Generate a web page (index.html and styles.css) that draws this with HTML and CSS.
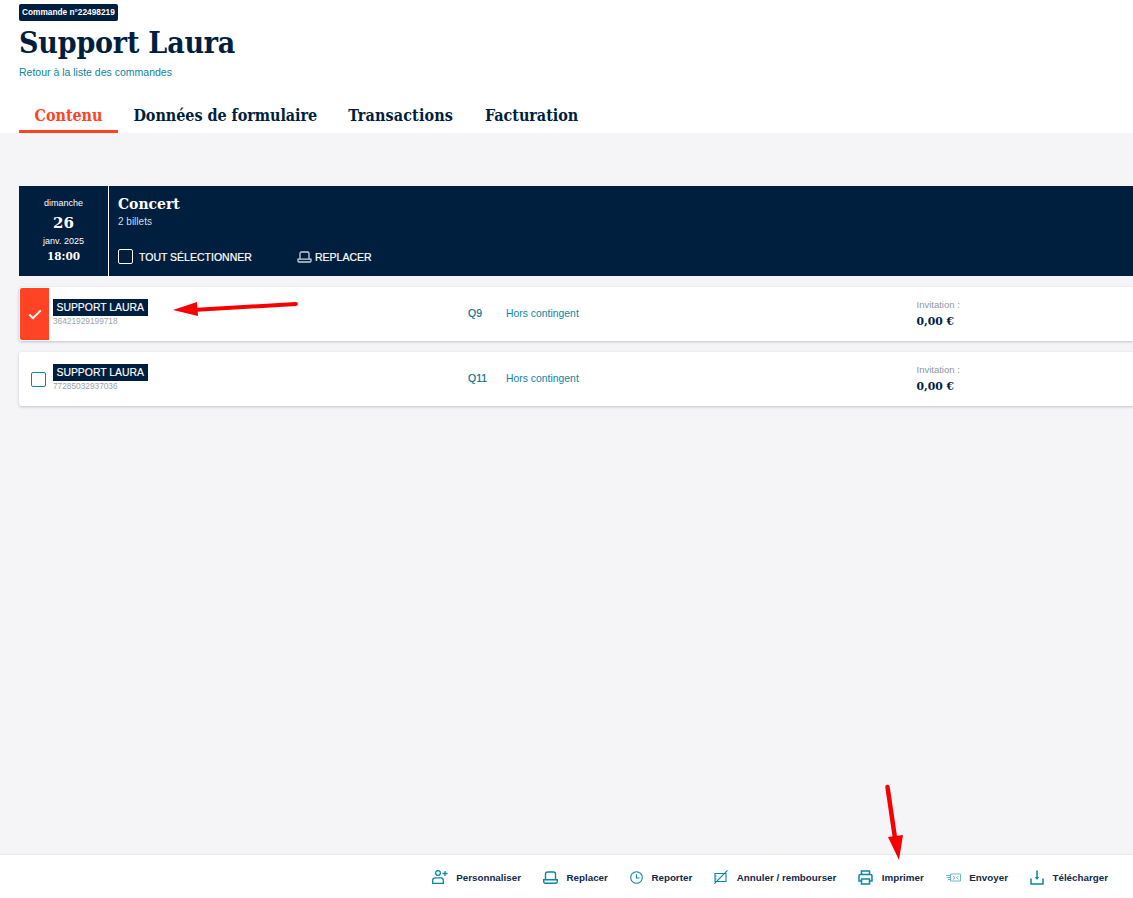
FILE: index.html
```html
<!DOCTYPE html>
<html lang="fr">
<head>
<meta charset="utf-8">
<title>Support Laura</title>
<link rel="stylesheet" href="styles.css">
</head>
<body>
<div class="page">
  <header class="head">
    <span class="badge">Commande n°22498219</span>
    <h1 class="title">Support Laura</h1>
    <a class="back">Retour à la liste des commandes</a>
    <nav class="tabs">
      <a class="tab active">Contenu</a>
      <a class="tab">Données de formulaire</a>
      <a class="tab">Transactions</a>
      <a class="tab">Facturation</a>
    </nav>
  </header>
  <main class="content">
    <section class="event">
      <div class="date">
        <span class="day">dimanche</span>
        <strong class="num">26</strong>
        <span class="month">janv. 2025</span>
        <strong class="time">18:00</strong>
      </div>
      <div class="info">
        <h2 class="name">Concert</h2>
        <p class="count">2 billets</p>
        <div class="actions">
          <label class="select"><span class="box"></span>TOUT SÉLECTIONNER</label>
          <span class="move">
            <svg width="15" height="12" viewBox="0 0 15 12" fill="none" stroke="#c9d3de" stroke-width="1.3"><path d="M3 8V2.500C3 1.600 3.600 1 4.500 1h6c.9 0 1.500.6 1.500 1.500V8"/><path d="M1 8.200h13V10c0 .6-.4 1-1 1H2c-.6 0-1-.4-1-1z"/></svg>
            REPLACER
          </span>
        </div>
      </div>
    </section>
    <article class="ticket checked">
      <div class="check">
        <svg width="14" height="11" viewBox="0 0 14 11" fill="none" stroke="#fff" stroke-width="2"><path d="M1.200 5.600 5 9.200 12.800 1.400"/></svg>
      </div>
      <div class="holder"><span class="person">SUPPORT LAURA</span><span class="code">36421929199718</span></div>
      <span class="seat">Q9</span>
      <span class="quota">Hors contingent</span>
      <div class="price"><span class="kind">Invitation :</span><strong class="amount">0,00 €</strong></div>
    </article>
    <article class="ticket">
      <div class="check"><span class="tick-box"></span></div>
      <div class="holder"><span class="person">SUPPORT LAURA</span><span class="code">77285032937036</span></div>
      <span class="seat">Q11</span>
      <span class="quota">Hors contingent</span>
      <div class="price"><span class="kind">Invitation :</span><strong class="amount">0,00 €</strong></div>
    </article>
  </main>
  <footer class="bar">
    <a class="tool">
      <svg width="16" height="14" viewBox="0 0 16 14" fill="none" stroke="#0b86a3" stroke-width="1.300"><circle cx="6" cy="3" r="2.400"/><path d="M.7 13.300v-3c0-1.500 1-2.500 2.500-2.500h5.600c1.500 0 2.500 1 2.500 2.500v3z"/><path d="M13 1v5M10.500 3.500h5"/></svg>
      <span>Personnaliser</span>
    </a>
    <a class="tool">
      <svg width="15" height="13" viewBox="0 0 15 13" fill="none" stroke="#0b86a3" stroke-width="1.400"><path d="M2.500 8.500V3c0-1.200.8-2 2-2h6c1.200 0 2 .8 2 2v5.500"/><path d="M.7 8.800h13.600v1.700c0 1-.7 1.700-1.700 1.700H2.400c-1 0-1.700-.7-1.700-1.700z"/></svg>
      <span>Replacer</span>
    </a>
    <a class="tool">
      <svg width="13" height="13" viewBox="0 0 13 13" fill="none" stroke="#0b86a3" stroke-width="1.100"><circle cx="6.500" cy="6.500" r="5.800"/><path d="M6.500 3.200v3.800h3"/></svg>
      <span>Reporter</span>
    </a>
    <a class="tool">
      <svg width="14" height="14" viewBox="0 0 14 14" fill="none" stroke="#0b86a3" stroke-width="1.100"><path d="M1 3.500h11v8H1zM1 6h1.500M1 9h1.500"/><path d="M.4 13.700 13.500.4"/></svg>
      <span>Annuler / rembourser</span>
    </a>
    <a class="tool">
      <svg width="15" height="15" viewBox="0 0 15 15" fill="none" stroke="#0b86a3" stroke-width="1.500"><path d="M3.500 4.500V1h8v3.500"/><path d="M3.500 11H1V6c0-.9.600-1.500 1.500-1.500h10c.9 0 1.500.6 1.500 1.500v5h-2.500"/><path d="M3.500 9h8v5h-8z"/></svg>
      <span>Imprimer</span>
    </a>
    <a class="tool">
      <svg width="15" height="9" viewBox="0 0 15 9" fill="none" stroke="#6fb9cc" stroke-width="1"><path d="M4.500 1h10v7h-10zM7 3l2 1.700M12.500 3l-2 1.700M7 6.500l2-1.800M12.500 6.500l-2-1.800M0 2.500h4M1 4.500h3M2 6.500h2"/></svg>
      <span>Envoyer</span>
    </a>
    <a class="tool">
      <svg width="14" height="15" viewBox="0 0 14 15" fill="none" stroke="#0b86a3" stroke-width="1.500"><path d="M1 8.500v5.500h12V8.500"/><path d="M7 .5v7"/><path d="M4.800 7h4.400L7 10z" fill="#0b86a3" stroke="none"/></svg>
      <span>Télécharger</span>
    </a>
  </footer>
  <svg class="arrows" width="1133" height="898" viewBox="0 0 1133 898">
    <path d="M296 304 193 310" stroke="#f60000" stroke-width="4" stroke-linecap="round" fill="none"/>
    <path d="M173 310 197 302 198 316z" fill="#f60000"/>
    <path d="M887.500 787 895 838" stroke="#f60000" stroke-width="4.500" stroke-linecap="round" fill="none"/>
    <path d="M899 860 888 837 903 835z" fill="#f60000"/>
  </svg>
</div>
</body>
</html>
```
FILE: styles.css
```css
* { box-sizing: border-box; }
html, body { margin: 0; height: 100%; }
body { font-family: "Liberation Sans", Arial, sans-serif; color: #001e3d; background: #f5f4f7; overflow: hidden; }
.page { position: relative; width: 1133px; height: 898px; display: flex; flex-direction: column; overflow: hidden; }

.head { background: #fff; height: 133px; padding: 4px 0 0 19px; display: flex; flex-direction: column; align-items: flex-start; }
.badge { background: #001e3d; color: #fff; font-size: 8.300px; font-weight: 700; height: 17px; line-height: 16px; width: 99px; padding-left: 3px; border-radius: 2px; white-space: nowrap; }
.title { margin: 2px 0 0; font-family: "DejaVu Serif Condensed", "DejaVu Serif", serif; font-size: 30px; line-height: 40px; font-weight: 700; color: #001e3d; letter-spacing: -.2px; }
.back { font-size: 10.500px; line-height: 12px; margin-top: 3px; color: #0b86a3; }
.tabs { display: flex; margin-top: 28px; }
.tab { font-family: "DejaVu Serif Condensed", "DejaVu Serif", serif; font-weight: 700; font-size: 16px; line-height: 18px; height: 27px; padding: 1px 15.500px 0; color: #001e3d; white-space: nowrap; letter-spacing: -.05px; }
.tab:nth-child(3) { letter-spacing: .12px; }
.tab:nth-child(4) { padding-left: 16.500px; }
.tab.active { color: #ff4324; border-bottom: 3px solid #ff4324; }

.content { flex: 1; padding: 53px 0 0 19px; }
.event { height: 90px; background: #001e3d; color: #fff; display: flex; }
.date { width: 89px; display: flex; flex-direction: column; align-items: center; padding-top: 11px; }
.day, .month { font-size: 9px; line-height: 12px; }
.num { font-family: "DejaVu Serif", serif; font-size: 15px; line-height: 20px; margin-top: 4px; }
.month { margin-top: 2px; }
.time { font-family: "DejaVu Serif", serif; font-size: 10.500px; line-height: 14px; margin-top: 2px; }
.info { flex: 1; border-left: 1px solid #fff; padding: 8px 0 0 9px; }
.name { margin: 0; font-family: "DejaVu Serif Condensed", "DejaVu Serif", serif; font-size: 15.500px; line-height: 20px; font-weight: 700; }
.count { margin: 2px 0 0; font-size: 10px; line-height: 12px; color: #d5dde6; }
.actions { display: flex; align-items: center; margin-top: 21px; font-size: 10.500px; font-weight: 400; }
.select { display: flex; align-items: center; gap: 6px; width: 179px; -webkit-text-stroke: .2px #fff; }
.box { width: 15px; height: 15px; border: 1px solid #fff; border-radius: 2px; }
.move { display: flex; align-items: center; gap: 3px; -webkit-text-stroke: .2px #fff; }

.ticket { height: 54px; margin-top: 11px; background: #fff; border-radius: 3px 0 0 3px; box-shadow: 0 1px 3px rgba(0, 30, 61, .22); display: flex; align-items: center; }
.check { width: 30px; height: 100%; display: flex; align-items: center; justify-content: center; flex: none; padding-left: 8px; margin-right: 4px; }
.checked .check { background: #ff4324; margin: 1px 4px 1px 1px; height: 52px; width: 29px; padding-left: 0; border-radius: 2px 0 0 2px; }
.tick-box { width: 15px; height: 15px; border: 1px solid #0b86a3; border-radius: 2px; }
.holder { width: 415px; display: flex; flex-direction: column; align-items: flex-start; padding-bottom: 3px; }
.person { background: #001e3d; color: #fff; font-size: 10.400px; line-height: 17px; height: 17px; padding: 0 4px 0 3.500px; white-space: nowrap; -webkit-text-stroke: .15px #fff; }
.code { font-size: 8.300px; line-height: 10px; color: #9aa3ad; }
.seat { width: 38px; font-size: 10.500px; color: #0b6f8c; -webkit-text-stroke: .2px #0b6f8c; margin-bottom: 2px; }
.quota { width: 410.500px; font-size: 10.400px; color: #0b86a3; margin-bottom: 2px; }
.price { display: flex; flex-direction: column; }
.kind { font-size: 9.500px; line-height: 12px; color: #8f97a1; }
.amount { font-family: "DejaVu Serif", serif; font-size: 10.800px; line-height: 16px; margin-top: 3px; color: #001e3d; }

.bar { height: 44px; background: #fff; border-top: 1px solid #e9e8ec; display: flex; justify-content: flex-end; align-items: center; padding: 1px 25px 0 0; gap: 22px; }
.tool { display: flex; align-items: center; gap: 8.500px; font-size: 9.800px; font-weight: 700; color: #102a4a; white-space: nowrap; }
.arrows { position: absolute; left: 0; top: 0; pointer-events: none; }
```
